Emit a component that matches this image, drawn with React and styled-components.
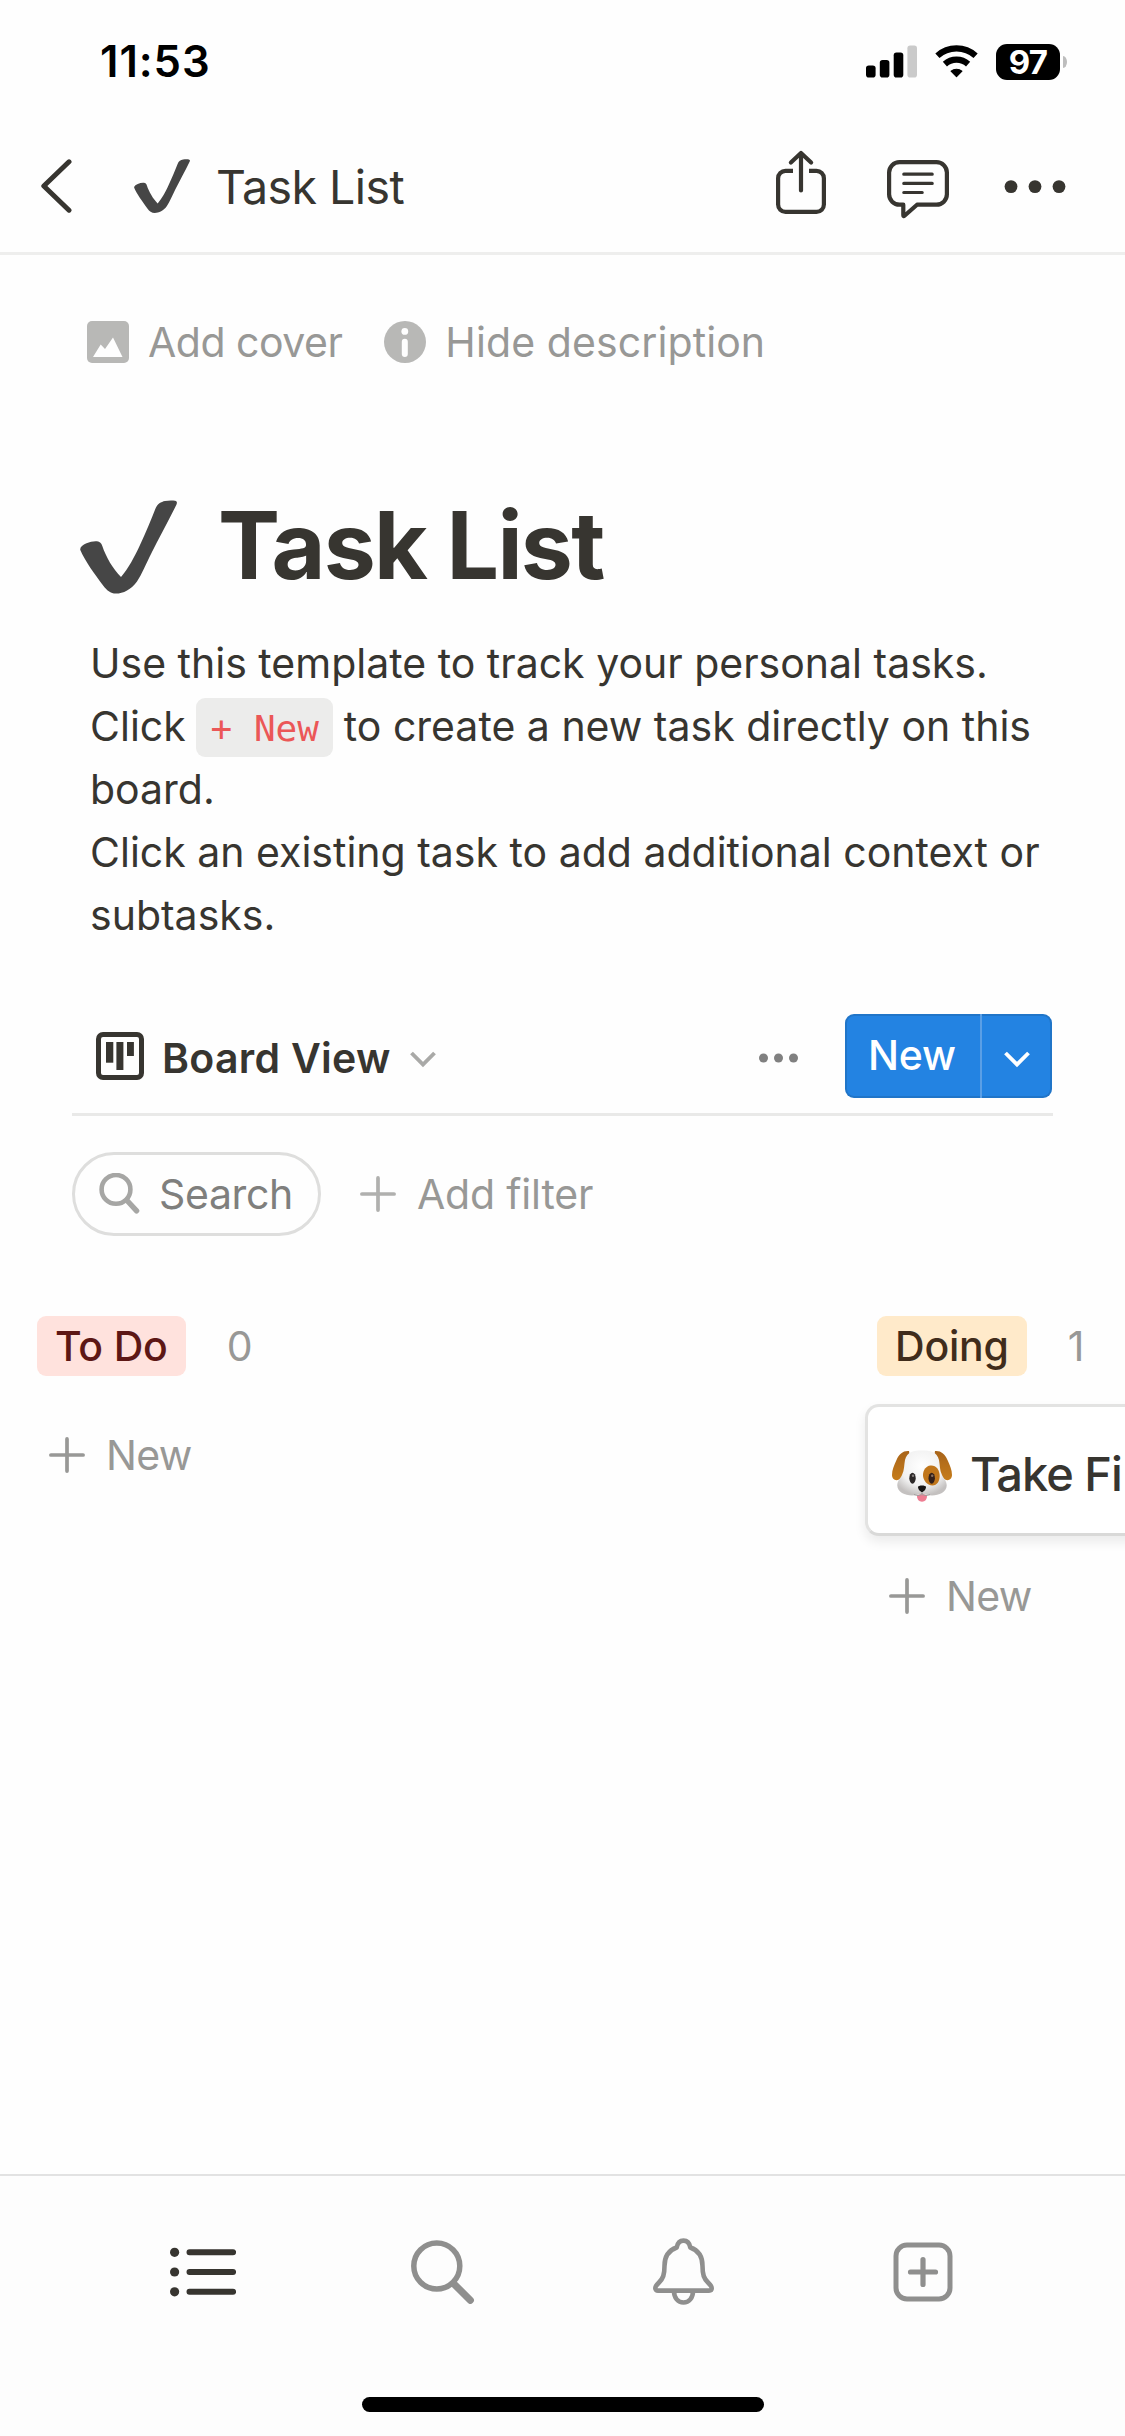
import React from 'react';
import styled, { createGlobalStyle } from 'styled-components';

const colors = {
  text: '#373530',
  gray: '#989896',
  lightGray: '#b8b8b6',
  midGray: '#808080',
  blue: '#2383e2',
  red: '#eb5757',
  tagRed: '#ffe2dd',
  tagRedText: '#5d1715',
  tagYellow: '#ffeaca',
  tagYellowText: '#402c1b',
};

const columns = [
  { name: 'To Do', bg: colors.tagRed, color: colors.tagRedText, cards: [] },
  { name: 'Doing', bg: colors.tagYellow, color: colors.tagYellowText, cards: ['Take Fi'] },
];

const SignalIcon = () => (
  <svg width="51" height="33" viewBox="0 0 51 33">
    <rect x="0" y="20.5" width="9.6" height="12" rx="2.8" />
    <rect x="13.8" y="15" width="9.6" height="17.5" rx="2.8" />
    <rect x="27.7" y="7.5" width="9.6" height="25" rx="2.8" />
    <rect x="41.4" y="0.5" width="9.6" height="32" rx="2.8" fill="#cacaca" />
  </svg>
);

const WifiIcon = () => (
  <svg width="43" height="33" viewBox="0 0 43 33" fill="none" stroke="#000" strokeWidth="6.2">
    <path d="M2.4 10.8a28.5 28.5 0 0 1 38.2 0" />
    <path d="M9.9 19.1a17.3 17.3 0 0 1 23.2 0" />
    <path
      d="M16.1 26.2a8.4 8.4 0 0 1 10.8 0l-5.4 5.4z"
      fill="#000"
      strokeWidth="1.2"
      strokeLinejoin="round"
    />
  </svg>
);

const BackIcon = () => (
  <svg width="31" height="54" viewBox="0 0 31 54" fill="none" stroke={colors.text}>
    <path d="M28 2.8L2.8 27 28 51.2" strokeWidth="5" strokeLinecap="round" strokeLinejoin="round" />
  </svg>
);

const CheckMark = ({ size }) => (
  <svg width={size} height={(size * 94) / 97} viewBox="0 0 97 94" fill="#464646">
    <path d="M.3 50C-.3 47.5 2.5 45 6.5 43.3C10 41.7 14 41 17 41.3C20 41.7 21.3 43 22.3 46C26 57 33 69 41 77C48 69 55 56 60 45C66 32 71 20 75.5 8.5C77.3 4 81 1.8 85 1C88.5.3 92.5.2 95 .8C97 1.2 97.3 2.5 96.500 4.5C88 22 79 38 71.500 53C66 64 62 74 57 81.5C51.500 89.5 43 93.6 36 93.6C30.500 93.6 26.5 90 23.500 86C14.500 74 5 61 .3 50Z" />
  </svg>
);

const ShareIcon = () => (
  <svg
    width="50"
    height="72"
    viewBox="0 0 50 72"
    fill="none"
    stroke={colors.text}
    strokeWidth="4.2"
    strokeLinejoin="round"
  >
    <path d="M17 20.8H9.5a7.4 7.4 0 0 0-7.4 7.4v26.3a7.4 7.4 0 0 0 7.4 7.4h31a7.4 7.4 0 0 0 7.4-7.4V28.2a7.4 7.4 0 0 0-7.4-7.4H33" />
    <path d="M25 3.5v37M14.9 12.5L25 2.9l10.1 9.6" strokeLinecap="round" />
  </svg>
);

const CommentIcon = () => (
  <svg
    width="62"
    height="72"
    viewBox="0 0 62 72"
    fill="none"
    stroke={colors.text}
    strokeLinecap="round"
    strokeLinejoin="round"
  >
    <path
      d="M12.5 12.1h37a10.4 10.4 0 0 1 10.4 10.4v21.8a10.4 10.4 0 0 1-10.4 10.4H30L17.5 65.8c-.7.6-1.2.3-1.2-.5V54.700h-3.8A10.4 10.4 0 0 1 2.1 44.3V22.5a10.4 10.4 0 0 1 10.4-10.4z"
      strokeWidth="4.2"
    />
    <path d="M16.8 24.2h28.4M16.8 33.4h28.4M16.8 42.5h18.4" strokeWidth="3.2" />
  </svg>
);

const DotsIcon = () => (
  <svg width="62" height="72" viewBox="0 0 62 72" fill={colors.text}>
    <circle cx="7" cy="36.6" r="6.4" />
    <circle cx="31" cy="36.6" r="6.4" />
    <circle cx="55" cy="36.6" r="6.4" />
  </svg>
);

const SmallDotsIcon = () => (
  <svg width="41" height="10" viewBox="0 0 41 10" fill={colors.midGray}>
    <circle cx="5.5" cy="5" r="4.5" />
    <circle cx="20.5" cy="5" r="4.5" />
    <circle cx="35.5" cy="5" r="4.5" />
  </svg>
);

const ImageIcon = () => (
  <svg width="42" height="42" viewBox="0 0 42 42">
    <rect width="42" height="42" rx="5" fill={colors.lightGray} />
    <path d="M6 36l7.7-12.5L18 28l8-11.5L35.5 36z" fill="#fefefe" />
  </svg>
);

const InfoIcon = () => (
  <svg width="42" height="42" viewBox="0 0 42 42">
    <circle cx="21" cy="21" r="21" fill={colors.lightGray} />
    <circle cx="20.8" cy="10.4" r="3.4" fill="#fefefe" />
    <rect x="17.8" y="17.7" width="6" height="18.3" rx="3" fill="#fefefe" />
  </svg>
);

const BoardIcon = () => (
  <svg width="48" height="48" viewBox="0 0 48 48" fill={colors.text}>
    <rect
      x="2.5"
      y="2.5"
      width="43"
      height="43"
      rx="4.5"
      fill="none"
      stroke={colors.text}
      strokeWidth="5"
    />
    <rect x="10" y="10" width="7.3" height="20.7" />
    <rect x="20.4" y="10" width="7" height="28" />
    <rect x="31" y="10" width="6.9" height="14" />
  </svg>
);

const ChevronDown = ({ color }) => (
  <svg width="26" height="17" viewBox="0 0 26 17" fill="none">
    <path d="M1.5 2L13 13.6 24.5 2" stroke={color} strokeWidth="3.9" />
  </svg>
);

const PillSearchIcon = () => (
  <svg width="41" height="41" viewBox="0 0 41 41" fill="none" stroke="#a6a6a4">
    <circle cx="17" cy="16.4" r="14.4" strokeWidth="4.6" />
    <path d="M28.5 28L37.6 37.8" strokeWidth="5.4" strokeLinecap="round" />
  </svg>
);

const PlusIcon = ({ color }) => (
  <svg width="36" height="36" viewBox="0 0 36 36" stroke={color} strokeWidth="3.7">
    <path d="M18 1.9v32.2M1.9 18h32.2" strokeLinecap="round" />
  </svg>
);

const DogIcon = () => (
  <svg width="60" height="52" viewBox="0 0 60 52">
    <defs>
      <radialGradient id="fur" cx="0.5" cy="0.35" r="0.65">
        <stop offset="0" stopColor="#fff" />
        <stop offset="0.65" stopColor="#f1f1f1" />
        <stop offset="1" stopColor="#c4c1c0" />
      </radialGradient>
      <linearGradient id="ear" x1="0" y1="0" x2="0" y2="1">
        <stop offset="0" stopColor="#a8641a" />
        <stop offset="1" stopColor="#c67c1a" />
      </linearGradient>
    </defs>
    <path
      d="M17 1C11 .5 7 4 4.5 10C2 15.5 0 20 0 25C0 29 3.5 31.5 7 29.5C13 26 16 14 18 8z"
      fill="url(#ear)"
    />
    <path
      d="M43 1C49 .5 53 4 55.5 10C58 15.5 60 20 60 25C60 29 56.5 31.5 53 29.5C47 26 44 14 42 8z"
      fill="url(#ear)"
    />
    <path
      d="M30 .5C38 .5 45 1.5 47 10C48 15 47.5 20 50 25C52 29 54.7 31 54.7 35.5C54.7 42 47 45.5 40 45.5C36 45.5 33 44 30 44C27 44 24 45.5 20 45.5C13 45.5 5.3 42 5.3 35.5C5.3 31 8 29 10 25C12.5 20 12 15 13 10C15 1.5 22 .5 30 .5z"
      fill="url(#fur)"
    />
    <path
      d="M38.5 15.5C44 15 47.7 20 47.7 26C47.7 31 45 35.5 40.5 35.5C35 35.5 31 30 31 25C31 20 34 16 38.5 15.5z"
      fill="#c0761b"
    />
    <ellipse cx="20.5" cy="28.2" rx="3.2" ry="5.5" fill="#2c2828" />
    <ellipse cx="39.7" cy="28.2" rx="3.2" ry="5.5" fill="#33201a" />
    <circle cx="21" cy="25.8" r="1.2" fill="#85807f" />
    <circle cx="40.2" cy="25.8" r="1.2" fill="#8a7263" />
    <path d="M25 46C25 43.5 35 43.5 35 46C35 49.5 33 51.7 30 51.7C27 51.7 25 49.5 25 46z" fill="#ee7d92" />
    <path
      d="M30 41v4.5M22 44.5C26 46.3 29 45.5 30 43.5C31 45.5 34 46.3 38 44.5"
      fill="none"
      stroke="#a09c9b"
    />
    <path d="M26 37C26 35 34 35 34 37C34 39.5 31.5 42 30 42C28.5 42 26 39.5 26 37z" fill="#161414" />
  </svg>
);

const ListIcon = () => (
  <svg width="66" height="50" viewBox="0 0 66 50" fill={colors.text}>
    <circle cx="4.6" cy="5.3" r="4.6" />
    <circle cx="4.6" cy="25" r="4.6" />
    <circle cx="4.6" cy="44.8" r="4.6" />
    <path
      d="M19.5 5.3h43.6M19.5 25h43.6M19.5 44.8h43.6"
      stroke={colors.text}
      strokeWidth="6"
      strokeLinecap="round"
    />
  </svg>
);

const SearchIcon = () => (
  <svg width="64" height="64" viewBox="0 0 64 64" fill="none" stroke="#8f8f8e">
    <circle cx="25.8" cy="26" r="23" strokeWidth="5.5" />
    <path d="M43 44L59.3 60.3" strokeWidth="7.2" strokeLinecap="round" />
  </svg>
);

const BellIcon = () => (
  <svg
    width="61"
    height="67"
    viewBox="0 0 61 67"
    fill="none"
    stroke="#8f8f8e"
    strokeWidth="4.6"
    strokeLinejoin="round"
  >
    <path d="M23.7 9.5C24.5 5 27 2.6 30.5 2.6C34 2.6 36.5 5 37.3 9.5C46 12.5 49.5 19.5 49.5 28C49.500 37 51 40.5 55 44.5C57.5 47 58.7 48.7 58.7 50.3C58.7 52 57.5 52.6 56 52.6H5C3.5 52.6 2.3 52 2.3 50.3C2.3 48.7 3.5 47 6 44.5C10 40.5 11.5 37 11.5 28C11.5 19.5 15 12.5 23.7 9.5z" />
    <path d="M21 53C21 60 25 64.5 30.5 64.5C36 64.5 40 60 40 53" />
  </svg>
);

const AddPageIcon = () => (
  <svg width="60" height="60" viewBox="0 0 60 60" fill="none" stroke="#8f8f8e" strokeWidth="5">
    <rect x="3" y="3" width="54" height="54" rx="11" />
    <path d="M30 17.5v25M17.5 30h25" strokeLinecap="round" strokeWidth="5.2" />
  </svg>
);

const Column = ({ name, bg, color, cards }) => (
  <ColumnContainer>
    <ColumnHeader>
      <Tag bg={bg} color={color}>
        {name}
      </Tag>
      <Count>{cards.length}</Count>
    </ColumnHeader>
    {cards.map((card) => (
      <Card key={card}>
        <DogIcon />
        <CardTitle>{card}</CardTitle>
      </Card>
    ))}
    <NewItem>
      <PlusIcon color={colors.gray} />
      New
    </NewItem>
  </ColumnContainer>
);

export default function App() {
  return (
    <Screen>
      <GlobalStyle />
      <StatusBar>
        <Time>11:53</Time>
        <StatusIcons>
          <SignalIcon />
          <WifiIcon />
          <Battery>
            <BatteryLevel>97</BatteryLevel>
            <BatteryTip />
          </Battery>
        </StatusIcons>
      </StatusBar>
      <Header>
        <BackIcon />
        <HeaderTitle>
          <CheckMark size={56} />
          Task List
        </HeaderTitle>
        <HeaderActions>
          <ShareIcon />
          <CommentIcon />
          <DotsIcon />
        </HeaderActions>
      </Header>
      <Main>
        <PageControls>
          <PageControl>
            <ImageIcon />
            <ControlLabel spacing={-0.5}>Add cover</ControlLabel>
          </PageControl>
          <PageControl>
            <InfoIcon />
            <ControlLabel spacing={0.1}>Hide description</ControlLabel>
          </PageControl>
        </PageControls>
        <TitleRow>
          <CheckMark size={97} />
          <Title>Task List</Title>
        </TitleRow>
        <Description>
          Use this template to track your personal tasks.
          <br />
          Click <Code>+ New</Code> to create a new task directly on this board.
          <br />
          Click an existing task to add additional context or subtasks.
        </Description>
        <ViewBar>
          <BoardIcon />
          <ViewSelect>
            Board View
            <ChevronDown color="#a9a9a7" />
          </ViewSelect>
          <MoreButton>
            <SmallDotsIcon />
          </MoreButton>
          <NewButton>
            <NewLabel>New</NewLabel>
            <NewMenu>
              <ChevronDown color="#fff" />
            </NewMenu>
          </NewButton>
        </ViewBar>
        <Filters>
          <SearchPill>
            <PillSearchIcon />
            Search
          </SearchPill>
          <AddFilter>
            <PlusIcon color="#b0b0ae" />
            Add filter
          </AddFilter>
        </Filters>
        <Board>
          {columns.map((column) => (
            <Column key={column.name} {...column} />
          ))}
        </Board>
      </Main>
      <TabBar>
        <Tabs>
          <Tab>
            <ListIcon />
          </Tab>
          <Tab>
            <SearchIcon />
          </Tab>
          <Tab>
            <BellIcon />
          </Tab>
          <Tab>
            <AddPageIcon />
          </Tab>
        </Tabs>
        <HomeIndicator />
      </TabBar>
    </Screen>
  );
}

const GlobalStyle = createGlobalStyle`
  * {
    box-sizing: border-box;
  }

  body {
    margin: 0;
  }

  svg {
    display: block;
    flex-shrink: 0;
  }
`;

const Screen = styled.div`
  background-color: #fefefe;
  color: ${colors.text};
  display: flex;
  flex-direction: column;
  font-family: Inter, 'Liberation Sans', sans-serif;
  font-size: 41px;
  height: 2436px;
  overflow: hidden;
  width: 1125px;
`;

const StatusBar = styled.div`
  align-items: center;
  display: flex;
  height: 120px;
  justify-content: space-between;
  padding: 3px 58px 0 100px;
`;

const Time = styled.span`
  color: #000;
  font-size: 43.6px;
  font-weight: 600;
  letter-spacing: 0.95px;
  line-height: 50px;
`;

const StatusIcons = styled.div`
  align-items: center;
  display: flex;
  gap: 18px;
`;

const Battery = styled.div`
  align-items: center;
  display: flex;
  gap: 3px;
`;

const BatteryLevel = styled.span`
  background-color: #000;
  border-radius: 11px;
  color: #fff;
  font-size: 33px;
  font-weight: 700;
  height: 36px;
  letter-spacing: -0.8px;
  line-height: 36px;
  text-align: center;
  width: 64px;
`;

const BatteryTip = styled.span`
  background-color: #bdbdbd;
  border-radius: 0 4px 4px 0 / 0 6px 6px 0;
  height: 12px;
  width: 4px;
`;

const Header = styled.header`
  align-items: center;
  border-bottom: 3px solid #eeeeed;
  display: flex;
  height: 135px;
  padding: 0 59px 0 41px;
`;

const HeaderTitle = styled.div`
  align-items: center;
  display: flex;
  font-size: 46.5px;
  gap: 26px;
  letter-spacing: -0.55px;
  line-height: 60px;
  margin-left: 62px;
  padding-top: 1px;
`;

const HeaderActions = styled.div`
  align-items: center;
  display: flex;
  gap: 55px;
  margin-left: auto;

  & > :first-child {
    margin-right: 6px;
  }
`;

const Main = styled.main`
  flex: 1;
  min-height: 0;
`;

const PageControls = styled.div`
  display: flex;
  gap: 42px;
  margin: 66px 0 0 87px;
`;

const PageControl = styled.div`
  align-items: center;
  color: ${colors.gray};
  display: flex;
  gap: 19px;
`;

const ControlLabel = styled.span`
  letter-spacing: ${({ spacing }) => spacing}px;
  line-height: 42px;
`;

const TitleRow = styled.div`
  align-items: center;
  display: flex;
  gap: 41px;
  height: 110px;
  margin: 127px 0 0 80px;

  svg {
    margin-top: 3px;
  }
`;

const Title = styled.h1`
  font-size: 93px;
  font-weight: 700;
  letter-spacing: -1.75px;
  line-height: 110px;
  margin: 0;
`;

const Description = styled.p`
  line-height: 63px;
  margin: 32px 72px 0 90px;
`;

const Code = styled.code`
  background-color: #ececeb;
  border-radius: 9px;
  color: ${colors.red};
  font-family: 'DejaVu Sans Mono', monospace;
  font-size: 36px;
  line-height: 1;
  margin: 0 -1px;
  padding: 10px 14.3px 7.5px;
`;

const ViewBar = styled.div`
  align-items: center;
  border-bottom: 3px solid #e9e9e8;
  display: flex;
  height: 102px;
  margin: 67px 72px 0;
  padding: 0 1px 15px 24px;
`;

const ViewSelect = styled.div`
  align-items: center;
  display: flex;
  font-weight: 600;
  gap: 19px;
  letter-spacing: 0.29px;
  line-height: 50px;
  margin-left: 18px;
  padding-top: 4px;

  svg {
    margin-top: 2px;
  }
`;

const MoreButton = styled.div`
  margin: 0 46px 0 auto;
  padding-top: 3px;
`;

const NewButton = styled.div`
  background-color: ${colors.blue};
  border-radius: 9px;
  box-shadow: inset 0 0 0 2px rgba(15, 15, 15, 0.12);
  color: #fff;
  display: flex;
  height: 84px;
  width: 207px;
`;

const NewLabel = styled.span`
  border-right: 2px solid #5a9fe6;
  font-weight: 500;
  letter-spacing: -0.2px;
  line-height: 82px;
  padding-left: 23px;
  width: 137px;
`;

const NewMenu = styled.span`
  align-items: center;
  display: flex;
  flex: 1;
  justify-content: center;
  padding-top: 6px;
`;

const Filters = styled.div`
  align-items: center;
  display: flex;
  gap: 39px;
  margin: 36px 0 0 72px;
`;

const SearchPill = styled.div`
  align-items: center;
  border: 3px solid #dededd;
  border-radius: 42px;
  color: #7f7f7d;
  display: flex;
  gap: 19px;
  height: 84px;
  letter-spacing: -0.36px;
  line-height: 50px;
  padding: 0 0 1px 24px;
  width: 249px;
`;

const AddFilter = styled.div`
  align-items: center;
  color: ${colors.gray};
  display: flex;
  gap: 21px;
  letter-spacing: -0.18px;
  line-height: 50px;
`;

const Board = styled.div`
  display: flex;
  gap: 24px;
  margin: 80px 0 0 25px;
`;

const ColumnContainer = styled.section`
  display: flex;
  flex: 0 0 816px;
  flex-direction: column;
`;

const ColumnHeader = styled.div`
  align-items: center;
  display: flex;
  gap: 41px;
  margin: 0 0 19px 12px;
`;

const Tag = styled.span`
  background-color: ${({ bg }) => bg};
  border-radius: 9px;
  color: ${({ color }) => color};
  font-weight: 500;
  height: 60px;
  letter-spacing: -0.2px;
  line-height: 60px;
  padding: 0 18px;
`;

const Count = styled.span`
  color: ${colors.gray};
  line-height: 60px;
`;

const Card = styled.div`
  align-items: center;
  background-color: #fff;
  border: 3px solid #e3e3e2;
  border-bottom-color: #d9d9d8;
  border-radius: 14px;
  box-shadow: 0 6px 12px rgba(15, 15, 15, 0.08);
  display: flex;
  gap: 18px;
  height: 132px;
  margin-top: 9px;
  padding: 12px 24px 0;
`;

const CardTitle = styled.span`
  font-size: 47px;
  font-weight: 500;
  letter-spacing: -1px;
  line-height: 60px;
  margin-top: -5px;
  white-space: nowrap;
`;

const NewItem = styled.div`
  align-items: center;
  color: ${colors.gray};
  display: flex;
  gap: 21px;
  letter-spacing: -0.7px;
  line-height: 60px;
  margin-top: 30px;
  padding-left: 24px;
`;

const TabBar = styled.nav`
  background-color: #fdfdfd;
  border-top: 2px solid #e2e2e2;
  height: 262px;
`;

const Tabs = styled.div`
  display: grid;
  grid-template-columns: repeat(4, 240px);
  height: 191px;
  padding-left: 83px;
`;

const Tab = styled.div`
  align-items: center;
  display: flex;
  justify-content: center;
`;

const HomeIndicator = styled.div`
  background-color: #000;
  border-radius: 8px;
  height: 15px;
  margin: 30px auto 0;
  width: 402px;
`;
